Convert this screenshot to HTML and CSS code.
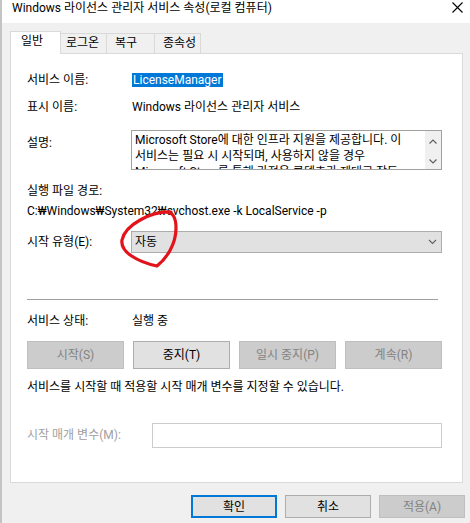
FILE: index.html
```html
<!DOCTYPE html>
<html lang="ko">
<head>
<meta charset="utf-8">
<title>Windows 라이선스 관리자 서비스 속성</title>
<link rel="stylesheet" href="styles.css">
</head>
<body>
<div class="window">
  <div class="titlebar">
    <span class="title">Windows 라이선스 관리자 서비스 속성(로컬 컴퓨터)</span>
    <svg class="close" width="11" height="11" viewBox="0 0 11 11"><path d="M0.5 0.5 L10.5 10.5 M10.5 0.5 L0.5 10.5" stroke="#000" stroke-width="1.1" fill="none"/></svg>
  </div>
  <div class="tabs">
    <div class="tab tab-active tab-1">일반</div>
    <div class="tab tab-2">로그온</div>
    <div class="tab tab-3">복구</div>
    <div class="tab tab-4">종속성</div>
  </div>
  <div class="panel">
    <div class="row r-name">
      <div class="label">서비스 이름:</div>
      <div class="value"><span class="sel">LicenseManager</span></div>
    </div>
    <div class="row r-display">
      <div class="label">표시 이름:</div>
      <div class="value">Windows 라이선스 관리자 서비스</div>
    </div>
    <div class="row r-desc">
      <div class="label label-desc">설명:</div>
      <div class="textbox">
        <div class="textbox-text">Microsoft Store에 대한 인프라 지원을 제공합니다. 이<br>서비스는 필요 시 시작되며, 사용하지 않을 경우<br>Microsoft Store를 통해 가져온 콘텐츠가 제대로 작동</div>
        <div class="scrollbar">
          <svg width="16" height="38" viewBox="0 0 16 38"><path d="M4.5 12.5 L8 9 L11.5 12.5" stroke="#606060" stroke-width="1.2" fill="none"/><path d="M4.5 28.5 L8 32 L11.5 28.5" stroke="#606060" stroke-width="1.2" fill="none"/></svg>
        </div>
      </div>
    </div>
    <div class="path-label">실행 파일 경로:</div>
    <div class="path">C:₩Windows₩System32₩svchost.exe -k LocalService -p</div>
    <div class="row r-start">
      <div class="label">시작 유형(E):</div>
      <div class="combo">
        <span>자동</span>
        <svg width="9" height="6" viewBox="0 0 9 6"><path d="M1 1 L4.5 4.5 L8 1" stroke="#606060" stroke-width="1.1" fill="none"/></svg>
      </div>
    </div>
    <div class="sep"></div>
    <div class="row r-status">
      <div class="label">서비스 상태:</div>
      <div class="value">실행 중</div>
    </div>
    <div class="btnrow">
      <div class="btn btn-disabled">시작(S)</div>
      <div class="btn">중지(T)</div>
      <div class="btn btn-disabled">일시 중지(P)</div>
      <div class="btn btn-disabled">계속(R)</div>
    </div>
    <div class="help">서비스를 시작할 때 적용할 시작 매개 변수를 지정할 수 있습니다.</div>
    <div class="row r-params">
      <div class="label label-params">시작 매개 변수(M):</div>
      <div class="input"></div>
    </div>
  </div>
  <div class="actions">
    <div class="btn abtn btn-default">확인</div>
    <div class="btn abtn">취소</div>
    <div class="btn abtn btn-disabled">적용(A)</div>
  </div>
  <svg class="annotation" width="470" height="523" viewBox="0 0 470 523">
    <path d="M171 212 C151 211 125 225 122 240 C120 252 138 262 157 266 C167 258 176 244 176 228 C176 218 173 212 166 212" stroke="#e3131b" stroke-width="3.2" fill="none" stroke-linecap="round" stroke-linejoin="round"/>
  </svg>
</div>
</body>
</html>
```

FILE: styles.css
```css
html, body {
  margin: 0;
  padding: 0;
}

body {
  width: 470px;
  height: 523px;
  overflow: hidden;
  background: #f0f0f0;
  font-family: Roboto, "Noto Sans CJK KR", sans-serif;
  font-size: 12px;
  line-height: 16px;
  color: #000;
}

.window {
  position: relative;
  width: 470px;
  height: 523px;
  border-left: 2px solid #c4c4c4;
  box-sizing: border-box;
}

.titlebar {
  height: 23px;
  background: #fff;
  display: flex;
  justify-content: space-between;
  align-items: flex-start;
  padding: 0 7px 0 10px;
}

.title {
  line-height: 16px;
}

.close {
  margin-top: 2px;
}

.tabs {
  display: flex;
  align-items: flex-end;
  height: 23px;
  margin: 8px 0 -1px 8px;
  position: relative;
  z-index: 1;
}

.tab {
  box-sizing: border-box;
  height: 20px;
  margin-bottom: 1px;
  border-top: 1px solid #d9d9d9;
  border-right: 1px solid #d9d9d9;
  background: #f0f0f0;
  line-height: 18px;
}

.tab-active {
  height: 23px;
  margin-bottom: 0;
  border-left: 1px solid #d9d9d9;
  background: #fff;
  line-height: 19px;
}

.tab-1 { width: 51px; padding-left: 10px; }
.tab-2 { width: 46px; padding-left: 5px; }
.tab-3 { width: 48px; padding-left: 8px; }
.tab-4 { width: 46px; padding-left: 8px; }

.panel {
  margin-left: 8px;
  width: 453px;
  height: 430px;
  box-sizing: border-box;
  border: 1px solid #d9d9d9;
  background: #fff;
  padding: 18px 20px 0 16px;
}

.row {
  display: flex;
}

.label {
  width: 105px;
  flex: none;
}

.r-name {
  height: 16px;
}

.sel {
  display: inline-block;
  height: 14px;
  line-height: 14px;
  margin-top: 1px;
  padding: 0 1px 0 1px;
  background: #0078d7;
  color: #fff;
}

.r-display {
  margin-top: 11px;
}

.r-desc {
  margin-top: 15px;
}

.label-desc {
  padding-top: 5px;
}

.textbox {
  flex: 1;
  height: 40px;
  box-sizing: border-box;
  border: 1px solid #a0a0a0;
  margin-left: -1px;
  display: flex;
  overflow: hidden;
}

.textbox-text {
  flex: 1;
  padding: 1px 0 0 3px;
  line-height: 16px;
  white-space: nowrap;
  overflow: hidden;
}

.scrollbar {
  width: 16px;
  flex: none;
  background: #f0f0f0;
}

.scrollbar svg {
  display: block;
}

.path-label {
  margin-top: 13px;
}

.path {
  margin-top: 4px;
}

.r-start {
  margin-top: 12px;
  line-height: 22px;
}

.combo {
  flex: 1;
  height: 22px;
  box-sizing: border-box;
  margin-left: -1px;
  border: 1px solid #adadad;
  background: #e1e1e1;
  display: flex;
  justify-content: space-between;
  align-items: center;
  padding: 0 4px 0 3px;
  line-height: 20px;
}

.sep {
  margin: 46px 4px 0 0;
  height: 1px;
  background: #a0a0a0;
}

.r-status {
  margin-top: 13px;
}

.btnrow {
  margin-top: 12px;
  display: grid;
  grid-template-columns: repeat(4, 1fr);
  column-gap: 9px;
}

.btn {
  height: 28px;
  box-sizing: border-box;
  border: 1px solid #adadad;
  background: #e1e1e1;
  display: flex;
  align-items: center;
  justify-content: center;
}

.btn-disabled {
  border-color: #bfbfbf;
  background: #cccccc;
  color: #838383;
}

.help {
  margin-top: 10px;
}

.r-params {
  margin-top: 28px;
  line-height: 25px;
}

.label-params {
  width: 125px;
  color: #a0a0a0;
}

.input {
  flex: 1;
  height: 25px;
  box-sizing: border-box;
  border: 1px solid #cccccc;
  background: #fff;
}

.actions {
  display: flex;
  gap: 8px;
  margin-top: 12px;
  padding-left: 189px;
}

.abtn {
  width: 86px;
  height: 23px;
}

.btn-default {
  border: 2px solid #0078d7;
}

.annotation {
  position: absolute;
  left: -2px;
  top: 0;
  pointer-events: none;
}
```
